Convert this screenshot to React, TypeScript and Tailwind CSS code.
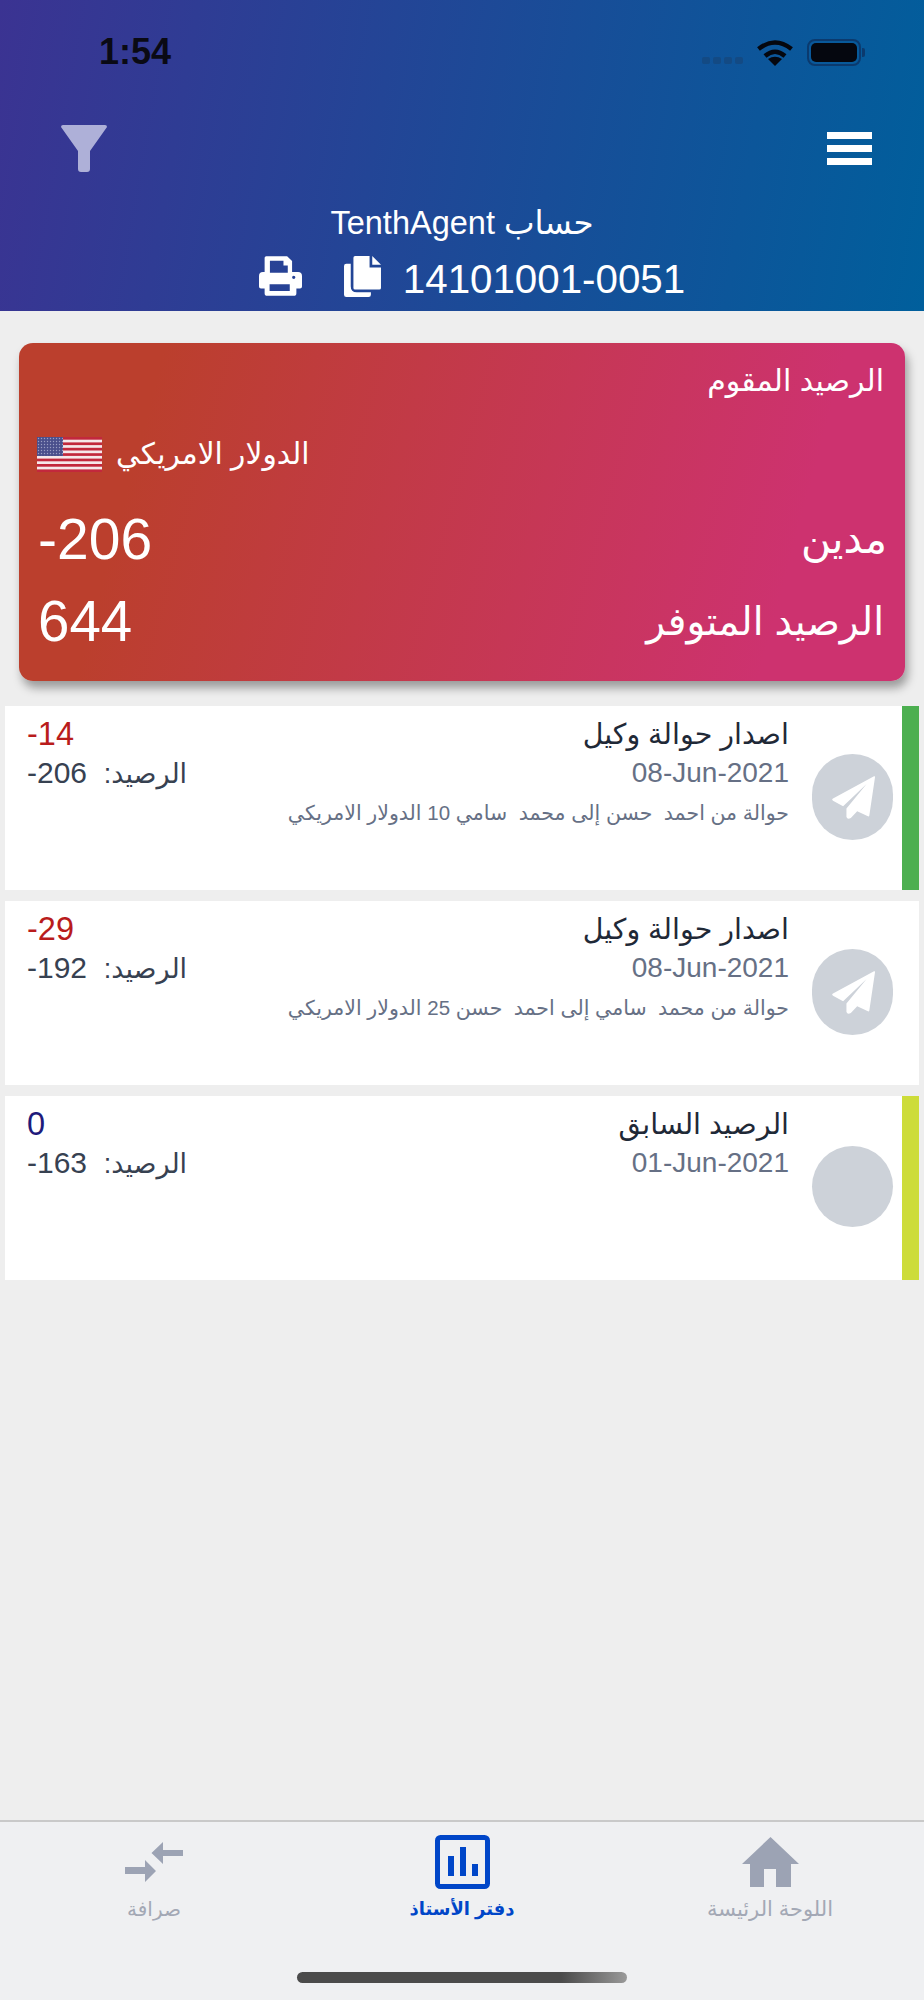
const SANS = "font-['Liberation_Sans','DejaVu_Sans',sans-serif]";

function PlaneIcon() {
  return (
    <svg viewBox="0 0 128 128" className="ml-[2px] h-[43px] w-[43px]" fill="#ffffff" aria-hidden="true">
      <path d="M125 1Q129 0 128 4L111 118Q110 121 107 120L75 105 56 125Q46 131 43 122V97L103 24 33 90 3 74Q-2 70 3 67Z" />
    </svg>
  );
}

function PrintIcon() {
  return (
    <svg viewBox="0 0 130 120" className="h-[40px] w-[43px]" fill="#ffffff" fillRule="evenodd" aria-hidden="true">
      <path d="M22 0H85L100 15V48H118Q130 48 130 60V92Q130 98 124 98H113V112Q113 120 105 120H25Q17 120 17 112V98H6Q0 98 0 92V60Q0 48 12 48H17V5Q17 0 22 0ZM33 14V50H87V28H74V14ZM32 85V105H93V85ZM105 59A5 5 0 1 0 105 69 5 5 0 1 0 105 59Z" />
    </svg>
  );
}

function CopyIcon() {
  return (
    <svg viewBox="0 0 110 122" className="h-[41px] w-[37px]" fill="#ffffff" aria-hidden="true">
      <path d="M0 30Q0 23 7 23H20V90Q20 108 38 108H80V115Q80 122 73 122H7Q0 122 0 115Z" />
      <path d="M28 5Q28 0 33 0H76V34H110V95Q110 100 105 100H33Q28 100 28 95Z" />
      <path d="M84 0 110 26H84Z" />
    </svg>
  );
}

function FlagIcon() {
  return (
    <svg viewBox="0 0 65 35" className="h-[35px] w-[65px]" preserveAspectRatio="none" aria-hidden="true">
      <defs>
        <pattern id="stars" width="3" height="3" patternUnits="userSpaceOnUse">
          <rect width="3" height="3" fill="#4a4f8c" />
          <circle cx="1.5" cy="1.5" r="0.7" fill="#9a9dc4" />
        </pattern>
      </defs>
      <rect width="65" height="35" fill="#f5e8ea" />
      {[0, 5.4, 10.8, 16.2, 21.6, 27, 32.4].map((y) => (
        <rect key={y} y={y} width="65" height="2.7" fill="#c2283c" />
      ))}
      <rect width="26" height="19" fill="url(#stars)" />
    </svg>
  );
}

type RowProps = {
  title: string;
  date: string;
  desc?: string;
  amount: string;
  amountClass: string;
  balance: string;
  barClass?: string;
  plane?: boolean;
};

function LedgerRow({ title, date, desc, amount, amountClass, balance, barClass, plane }: RowProps) {
  return (
    <div dir="rtl" className="ml-[5px] mr-[5px] flex h-[184px] bg-white">
      <div className={`w-[17px] shrink-0 ${barClass ?? "bg-white"}`} />
      <div className="mr-[9px] mt-[48px] w-[81px] shrink-0">
        <div className={`flex w-[81px] items-center justify-center rounded-full bg-[#cdd2d9] ${plane ? "h-[86px]" : "mt-[2px] h-[81px]"}`}>
          {plane && <PlaneIcon />}
        </div>
      </div>
      <div className="flex flex-1 justify-between pl-[22px] pr-[23px] pt-[10px]">
        <div>
          <div className="h-[36px] text-[28.5px] leading-[36px] text-[#1f2937]">{title}</div>
          <div dir="ltr" className={`${SANS} mt-[3px] h-[36px] text-right text-[28px] leading-[36px] text-[#667085]`}>{date}</div>
          {desc && <div className="mt-[4px] h-[36px] whitespace-pre text-[20.5px] leading-[36px] text-[#667085]">{desc}</div>}
        </div>
        <div className="text-left">
          <div dir="ltr" className={`${SANS} h-[36px] text-[32.5px] leading-[36px] ${amountClass}`}>{amount}</div>
          <div className="mt-[3px] h-[36px] whitespace-pre text-[27px] leading-[36px] text-[#374151]">
            الرصيد:<span className={`${SANS} text-[30px]`}>{"  " + balance}</span>
          </div>
        </div>
      </div>
    </div>
  );
}

export default function App() {
  return (
    <div className={`${SANS} flex h-[2000px] w-[924px] flex-col overflow-hidden bg-[#eeeeee]`}>
      {/* Header */}
      <header className="h-[311px] shrink-0 overflow-hidden bg-[linear-gradient(100deg,#3b3392,#005f9c)] pt-[36px] text-white">
        <div className="flex h-[32px] items-center justify-between pl-[99px] pr-[59px]">
          <span className="text-[36px] font-bold leading-[32px] text-[#0a0a14]">1:54</span>
          <div className="flex items-center">
            <div className="mr-[14px] mt-[17px] flex gap-[3px]">
              {[0, 1, 2, 3].map((i) => (
                <span key={i} className="h-[7px] w-[8px] rounded-[2px] bg-[#134a84]" />
              ))}
            </div>
            <svg viewBox="0 0 36 27" className="mr-[14px] h-[27px] w-[36px]" fill="none" stroke="#05070f" strokeWidth="4.5" aria-hidden="true">
              <path d="M1.5 10Q18 -3 34.5 10" />
              <path d="M8 17Q18 8.5 28 17" />
              <path d="M18 27 11 20Q18 15.5 25 20Z" fill="#05070f" stroke="none" />
            </svg>
            <div className="flex h-[27px] w-[54px] items-center rounded-[8px] border-2 border-[#0b3a6e] p-[2px]">
              <div className="h-full w-full rounded-[5px] bg-[#05070f]" />
            </div>
            <span className="ml-[1px] h-[9px] w-[3px] rounded-r-[2px] bg-[#0b3a6e]" />
          </div>
        </div>

        <div className="mt-[57px] flex h-[47px] items-center justify-between pl-[61px] pr-[52px]">
          <svg viewBox="0 0 46 47" className="h-[47px] w-[46px]" fill="#aeb0d8" aria-hidden="true">
            <path d="M2 0H44Q46 0 46 2L29 26V44Q29 47 26 47H20Q17 47 17 44V26L0 2Q0 0 2 0Z" />
          </svg>
          <div className="flex w-[45px] flex-col gap-[6px]">
            <span className="h-[7px] bg-white" />
            <span className="h-[7px] bg-white" />
            <span className="h-[7px] bg-white" />
          </div>
        </div>

        <div dir="rtl" className="mt-[31px] h-[40px] text-center text-[32.5px] leading-[40px]">
          حساب TenthAgent
        </div>
        <div className="mt-[9px] flex h-[48px] items-center justify-center pl-[20px]">
          <PrintIcon />
          <span className="ml-[42px]">
            <CopyIcon />
          </span>
          <span className="ml-[22px] mt-[7px] text-[40.3px] leading-[48px]">14101001-0051</span>
        </div>
      </header>

      {/* Balance card */}
      <section className="mx-[19px] mt-[32px] flex h-[338px] flex-col rounded-[14px] bg-[linear-gradient(105deg,#bb3f2d_15%,#cd326f_85%)] text-white shadow-[3px_7px_10px_rgba(0,0,0,0.35)]">
        <div dir="rtl" className="mr-[21px] mt-[20px] h-[36px] text-[30px] leading-[36px]">الرصيد المقوم</div>
        <div className="ml-[18px] mt-[35px] flex h-[40px] items-center gap-[14px]">
          <FlagIcon />
          <span className="text-[29.7px] leading-[40px]">الدولار الامريكي</span>
        </div>
        <div className="mt-[35px] flex h-[60px] items-center justify-between pl-[19px] pr-[18px]">
          <span className="text-[57px] leading-[60px]">-206</span>
          <span className="text-[41px] leading-[60px]">مدين</span>
        </div>
        <div className="mt-[23px] flex h-[60px] items-center justify-between pl-[19px] pr-[21px]">
          <span className="text-[56.5px] leading-[60px]">644</span>
          <span className="text-[39px] leading-[60px]">الرصيد المتوفر</span>
        </div>
      </section>

      {/* Ledger rows */}
      <main className="mt-[25px] flex flex-1 flex-col gap-[11px]">
        <LedgerRow
          title="اصدار حوالة وكيل"
          date="08-Jun-2021"
          desc="حوالة من احمد  حسن إلى محمد  سامي 10 الدولار الامريكي"
          amount="-14"
          amountClass="text-[#b91c1c]"
          balance="206-"
          barClass="bg-[#4caf50]"
          plane
        />
        <LedgerRow
          title="اصدار حوالة وكيل"
          date="08-Jun-2021"
          desc="حوالة من محمد  سامي إلى احمد  حسن 25 الدولار الامريكي"
          amount="-29"
          amountClass="text-[#b91c1c]"
          balance="192-"
          plane
        />
        <LedgerRow
          title="الرصيد السابق"
          date="01-Jun-2021"
          amount="0"
          amountClass="text-[#1e1b7b]"
          balance="163-"
          barClass="bg-[#cddc39]"
        />
      </main>

      {/* Tab bar */}
      <nav className="h-[180px] shrink-0 border-t-2 border-[#c9c9c9] bg-[#eff0f2]">
        <div className="grid h-[130px] grid-cols-3 pt-[13px]">
          <div className="flex flex-col items-center">
            <div className="flex h-[54px] items-center">
              <svg viewBox="0 0 58 40" className="h-[40px] w-[58px]" fill="#9ca3b4" aria-hidden="true">
                <path d="M58 8H38V0L26.5 11 38 22V14H58Z" />
                <path d="M0 25H20V18L31 29 20 40V32H0Z" />
              </svg>
            </div>
            <span className="mt-[5px] text-[20px] leading-[30px] text-[#a3a8b5]">صرافة</span>
          </div>
          <div className="flex flex-col items-center">
            <div className="flex h-[54px] items-center">
              <svg viewBox="0 0 55 54" className="h-[54px] w-[55px]" aria-hidden="true">
                <rect x="2.5" y="2.5" width="50" height="49" rx="3" fill="none" stroke="#0046c8" strokeWidth="5" />
                <rect x="13" y="21" width="6" height="20" fill="#0046c8" />
                <rect x="25" y="12" width="6" height="29" fill="#0046c8" />
                <rect x="37" y="29" width="6" height="12" fill="#0046c8" />
              </svg>
            </div>
            <span className="mt-[5px] text-[18px] font-bold leading-[30px] text-[#0046c8]">دفتر الأستاذ</span>
          </div>
          <div className="flex flex-col items-center">
            <div className="flex h-[54px] items-center">
              <svg viewBox="0 0 57 50" className="h-[50px] w-[57px]" fill="#9ca3b4" aria-hidden="true">
                <path d="M28.5 0 57 27H49V50H34V32H22V50H8V27H0Z" />
              </svg>
            </div>
            <span className="mt-[5px] text-[21px] leading-[30px] text-[#a3a8b5]">اللوحة الرئيسة</span>
          </div>
        </div>
        <div className="mx-auto mt-[20px] h-[11px] w-[330px] rounded-full bg-gradient-to-r from-[#4b4b4b] from-80% to-[#9a9a9a]" />
      </nav>
    </div>
  );
}
